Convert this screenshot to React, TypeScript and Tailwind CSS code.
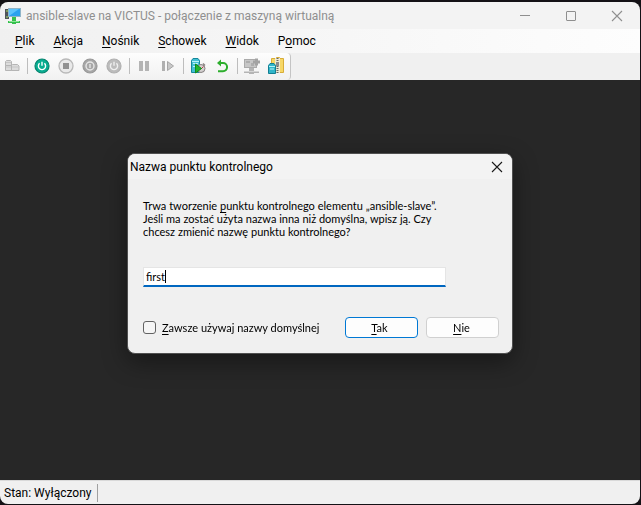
import { useState } from "react";
import type { ReactNode } from "react";

const menus = [
  { before: "", key: "P", after: "lik" },
  { before: "", key: "A", after: "kcja" },
  { before: "", key: "N", after: "ośnik" },
  { before: "", key: "S", after: "chowek" },
  { before: "", key: "W", after: "idok" },
  { before: "P", key: "o", after: "moc" },
];

function Key({ children }: { children: ReactNode }) {
  return <span className="underline decoration-1 underline-offset-2">{children}</span>;
}

function VmIcon() {
  return (
    <svg width="18" height="18" viewBox="0 0 18 18" aria-hidden="true">
      <path d="M1 2h4v10H1z" fill="#50555a" />
      <path d="M2 4h2M2 10h2" stroke="#a8e05c" />
      <rect x="4" y="1" width="13" height="9" fill="#8fb4c8" />
      <rect x="5" y="2" width="11" height="7" fill="#2aa1ee" />
      <path d="M5 9V2h10z" fill="#5cc3fb" />
      <path d="M8 10h4v4h4v2h-4v1H8v-1H4v-2h4z" fill="#35c04d" />
      <path d="M5 14.500h10" stroke="#8ae693" />
    </svg>
  );
}

function ServersIcon() {
  return (
    <svg width="16" height="16" viewBox="0 0 16 16" aria-hidden="true">
      <path d="M1.500 7.500V3.500l1-1h4l1 1v4zM1.500 7.500h6v5h-6zM7.500 12.500v-5l1-1h5l1.500 1.500v4.500z" fill="#dcdcdc" stroke="#b5b5b5" />
      <path d="M2 4.500h5M2 9h5M8 9h6" stroke="#c6c6c6" />
    </svg>
  );
}

function PowerIcon({ ring, fill, mark }: { ring: string; fill: string; mark: string }) {
  return (
    <svg width="16" height="16" viewBox="0 0 16 16" aria-hidden="true">
      <circle cx="8" cy="8" r="7" fill={fill} stroke={ring} strokeWidth="1.200" />
      <path d="M8 3.700v4M5.600 5.300a3.600 3.600 0 1 0 4.800 0" fill="none" stroke={mark} strokeWidth="1.400" />
    </svg>
  );
}

function StopIcon() {
  return (
    <svg width="16" height="16" viewBox="0 0 16 16" aria-hidden="true">
      <circle cx="8" cy="8" r="7" fill="#e9e9e9" stroke="#b9b9b9" strokeWidth="1.300" />
      <rect x="5" y="5" width="6" height="6" fill="#919191" />
    </svg>
  );
}

function ShutdownIcon() {
  return (
    <svg width="16" height="16" viewBox="0 0 16 16" aria-hidden="true">
      <circle cx="8" cy="8" r="7" fill="#a7a7a7" stroke="#989898" strokeWidth="1.200" />
      <circle cx="8" cy="8" r="4" fill="none" stroke="#e6e6e6" strokeWidth="1.400" />
      <path d="M8 6v4" stroke="#e6e6e6" strokeWidth="1.400" />
    </svg>
  );
}

function PauseIcon() {
  return (
    <svg width="16" height="16" viewBox="0 0 16 16" aria-hidden="true">
      <path d="M3 3h4v10H3zM9 3h4v10H9z" fill="#b4b4b4" />
    </svg>
  );
}

function ResetIcon() {
  return (
    <svg width="16" height="16" viewBox="0 0 16 16" aria-hidden="true">
      <path d="M2 3h3v10H2z" fill="#b0b0b0" />
      <path d="M7.500 3.500v9l6-4.500z" fill="#c8c8c8" stroke="#a6a6a6" />
    </svg>
  );
}

function CheckpointIcon() {
  return (
    <svg width="16" height="16" viewBox="0 0 16 16" aria-hidden="true">
      <path d="M1.500 2.500l1.500-2h5l1.500 2v12h-8z" fill="#43c0d4" stroke="#16879a" />
      <path d="M2 3.500h7M3 5.500h5M3 8.500h3" stroke="#b9f2f8" />
      <circle cx="11" cy="10.500" r="4" fill="#d4d0d0" stroke="#858080" />
      <path d="M13 5.500l2 2" stroke="#8a8080" strokeWidth="1.500" />
      <path d="M11 11l2.500-2.500" stroke="#b54040" />
      <path d="M5.500 6v9l6-4.500z" fill="#20b62c" stroke="#108a1d" />
    </svg>
  );
}

function RevertIcon() {
  return (
    <svg width="16" height="16" viewBox="0 0 16 16" aria-hidden="true">
      <path d="M5 5h4a3.800 3.800 0 0 1 0 8.200H4" fill="none" stroke="#2dae2d" strokeWidth="2" />
      <path d="M7 1.500v7L3 5z" fill="#2dae2d" />
    </svg>
  );
}

function SessionIcon() {
  return (
    <svg width="18" height="18" viewBox="0 0 18 18" aria-hidden="true">
      <rect x="1.500" y="2.500" width="12" height="8" fill="#c6c6c6" stroke="#aaaaaa" />
      <path d="M3 4h4v2H3zM8 6h3v3H8z" fill="#adadad" />
      <path d="M10 5h7M13.500 1.500v7" stroke="#a3a3a3" strokeWidth="3" />
      <path d="M6 11h5v3h5v2h-5v1H6v-1H1v-2h5z" fill="#b4b4b4" />
      <path d="M1 14.500h15" stroke="#d5d5d5" />
    </svg>
  );
}

function ShareIcon() {
  return (
    <svg width="18" height="18" viewBox="0 0 18 18" aria-hidden="true">
      <path d="M4.500 1.500h5v-1h3v1h4v14h-12z" fill="#f7d765" stroke="#d8ad38" />
      <path d="M8 1h5v15H8z" fill="#eee9d2" />
      <path d="M10.500 1v15" stroke="#666" strokeWidth="2" strokeDasharray="1 1" />
      <path d="M9 5h3v4H9z" fill="#8c8c8c" />
      <path d="M1.500 8.500L3 6.500h4l1.500 2v8h-7z" fill="#31b5c9" stroke="#117f93" />
      <path d="M2 9.500h6M3 12h4" stroke="#b7f2f8" />
    </svg>
  );
}

function Tool({ label, children }: { label: string; children: ReactNode }) {
  return (
    <button type="button" aria-label={label} className="flex h-6 w-6 shrink-0 items-center justify-center">
      {children}
    </button>
  );
}

function Divider() {
  return (
    <div className="flex w-1.5 shrink-0 justify-center">
      <div className="h-4 w-px bg-[#bdbdbd]" />
    </div>
  );
}

function Cross() {
  return (
    <svg width="12" height="12" viewBox="0 0 12 12" fill="none" stroke="currentColor" strokeWidth="1.100" aria-hidden="true">
      <path d="M1 1l10 10M11 1L1 11" />
    </svg>
  );
}

function CheckpointDialog() {
  const [name, setName] = useState("first");
  return (
    <section
      role="dialog"
      aria-labelledby="dialog-title"
      className="w-full max-w-[386px] overflow-hidden rounded-lg border border-[#505050] bg-[#f0f0f0] pb-[15px] text-black shadow-[0_8px_24px_rgba(0,0,0,0.4)]"
    >
      <header className="flex h-[25px] items-center justify-between bg-[#f3f3f3] pr-2 pl-0.5">
        <h1 id="dialog-title" className="text-[12px]">
          Nazwa punktu kontrolnego
        </h1>
        <button type="button" aria-label="Zamknij" className="flex h-6 w-3.5 items-center justify-center text-[#1a1a1a]">
          <Cross />
        </button>
      </header>
      <form
        className="pt-5 pr-[13px] pl-[15px] font-[Lato,'Liberation_Sans',sans-serif] text-[11px] leading-[13px]"
        onSubmit={(event) => event.preventDefault()}
      >
        <label htmlFor="checkpoint" className="block">
          Trwa tworzenie <Key>p</Key>unktu kontrolnego elementu „ansible-slave”.
          <br />
          Jeśli ma zostać użyta nazwa inna niż domyślna, wpisz ją. Czy
          <br />
          chcesz zmienić nazwę punktu kontrolnego?
        </label>
        <div className="mt-[29px] mr-[53px] flex h-5 items-center border border-b-2 border-[#e5e5e5] border-b-[#0067c0] bg-white px-0.5">
          <input
            id="checkpoint"
            autoFocus
            value={name}
            onChange={(event) => setName(event.target.value)}
            className="field-sizing-content max-w-full bg-transparent caret-transparent outline-none"
          />
          <span className="h-[13px] w-px bg-black" />
        </div>
        <div className="mt-[30px] flex items-center">
          <label className="flex flex-1 items-center gap-1.5">
            <input
              type="checkbox"
              className="h-[13px] w-[13px] shrink-0 appearance-none rounded-[3px] border border-[#626262] bg-[#f5f5f5] checked:bg-[#0067c0]"
            />
            <span>
              <Key>Z</Key>awsze używaj nazwy domyślnej
            </span>
          </label>
          <div className="flex gap-2">
            <button type="submit" className="h-[21px] w-[73px] rounded border border-[#0078d4] bg-[#fdfdfd] pr-1">
              <Key>T</Key>ak
            </button>
            <button type="button" className="h-[21px] w-[73px] rounded border border-[#d0d0d0] bg-[#fdfdfd] pr-0.5">
              <Key>N</Key>ie
            </button>
          </div>
        </div>
      </form>
    </section>
  );
}

export default function App() {
  return (
    <div className="flex min-h-screen flex-col bg-[#141216] pt-0.5 pr-px pb-px font-[Roboto,'Noto_Sans',sans-serif] text-[12px] text-black">
      <div className="flex flex-1 flex-col overflow-hidden rounded-lg bg-[#272727]">
        <header className="flex h-[27px] items-center bg-[#f3f3f3] pl-1 text-[#8f8f8f]">
          <VmIcon />
          <span className="ml-1 flex-1 whitespace-nowrap">ansible-slave na VICTUS - połączenie z maszyną wirtualną</span>
          <div className="flex">
            <button type="button" aria-label="Minimalizuj" className="flex w-[46px] items-center justify-center">
              <span className="h-px w-2.5 bg-[#8f8f8f]" />
            </button>
            <button type="button" aria-label="Maksymalizuj" className="flex w-[46px] items-center justify-center">
              <span className="h-2.5 w-2.5 rounded-[1px] border border-[#8f8f8f]" />
            </button>
            <button type="button" aria-label="Zamknij okno" className="flex w-[46px] items-center justify-center">
              <Cross />
            </button>
          </div>
        </header>

        <nav className="flex h-6 items-center gap-[19px] bg-linear-to-r from-[#f0f0f0] to-[#fdfdfd] pl-[15px]">
          {menus.map((menu) => (
            <button type="button" key={menu.after}>
              {menu.before}
              <Key>{menu.key}</Key>
              {menu.after}
            </button>
          ))}
        </nav>

        <div className="flex h-[27px] bg-[#f0f0f0]">
          <div role="toolbar" className="flex items-center rounded-r-sm border-r border-[#c4c4c4] bg-linear-to-b from-[#fdfdfd] to-[#f1f1f1] pr-0.5 pb-0.5">
            <Tool label="Ctrl-Alt-Delete"><ServersIcon /></Tool>
            <Divider />
            <Tool label="Uruchom"><PowerIcon ring="#07846f" fill="#08ad91" mark="#ffffff" /></Tool>
            <Tool label="Wyłącz"><StopIcon /></Tool>
            <Tool label="Zamknij system"><ShutdownIcon /></Tool>
            <Tool label="Zapisz"><PowerIcon ring="#b0b0b0" fill="#bcbcbc" mark="#efefef" /></Tool>
            <Divider />
            <Tool label="Wstrzymaj"><PauseIcon /></Tool>
            <Tool label="Resetuj"><ResetIcon /></Tool>
            <Divider />
            <Tool label="Punkt kontrolny"><CheckpointIcon /></Tool>
            <Tool label="Przywróć"><RevertIcon /></Tool>
            <Divider />
            <Tool label="Sesja rozszerzona"><SessionIcon /></Tool>
            <Tool label="Udostępnij"><ShareIcon /></Tool>
          </div>
        </div>

        <main className="flex flex-1 items-start justify-center bg-[#272727] pt-[73px]">
          <CheckpointDialog />
        </main>

        <footer className="flex h-6 items-center border-t border-[#d9d9d9] bg-[#f0f0f0] pl-1">
          <span className="border-r border-[#a0a0a0] pr-1.5">Stan: Wyłączony</span>
        </footer>
      </div>
    </div>
  );
}
